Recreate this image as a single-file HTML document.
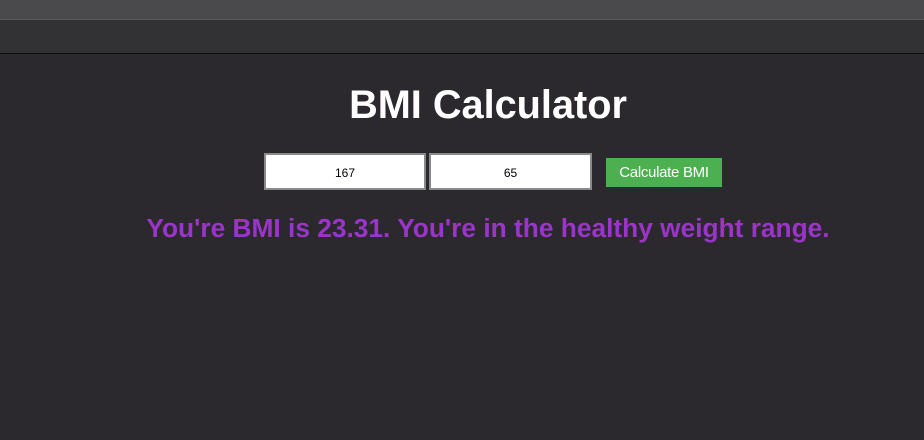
<!DOCTYPE html>
<html><head><style>
body{margin:0;width:924px;height:440px;background:#2b292e;font-family:"Liberation Sans",sans-serif;overflow:hidden;position:relative}
.t1{position:absolute;left:0;top:0;width:924px;height:19px;background:#4a4a4c;border-bottom:1px solid #5c5c5e}
.t2{position:absolute;left:0;top:20px;width:924px;height:33px;background:#323234;border-bottom:1px solid #0e0e10}
h1{position:absolute;left:0;width:976px;top:83px;margin:0;text-align:center;color:#fff;font-size:39.7px;font-weight:bold}
.in{position:absolute;top:153px;height:33px;background:#fff;border:2px solid #8a8a8a;box-sizing:content-box;text-align:center;line-height:37px;font-size:12px;color:#000;font-family:"Liberation Sans",sans-serif}
.btn{position:absolute;left:606px;top:158px;width:116px;height:29px;background:#4caf50;color:#fff;font-size:15px;text-align:center;line-height:29px;letter-spacing:-0.3px}
p{position:absolute;left:0;width:976px;top:213px;margin:0;text-align:center;color:#9b35c9;font-size:26.3px;font-weight:bold}
</style></head><body>
<div class="t1"></div><div class="t2"></div>
<h1>BMI Calculator</h1>
<div class="in" style="left:264px;width:158px">167</div>
<div class="in" style="left:429px;width:159px">65</div>
<div class="btn">Calculate BMI</div>
<p>You're BMI is 23.31. You're in the healthy weight range.</p>
</body></html>
